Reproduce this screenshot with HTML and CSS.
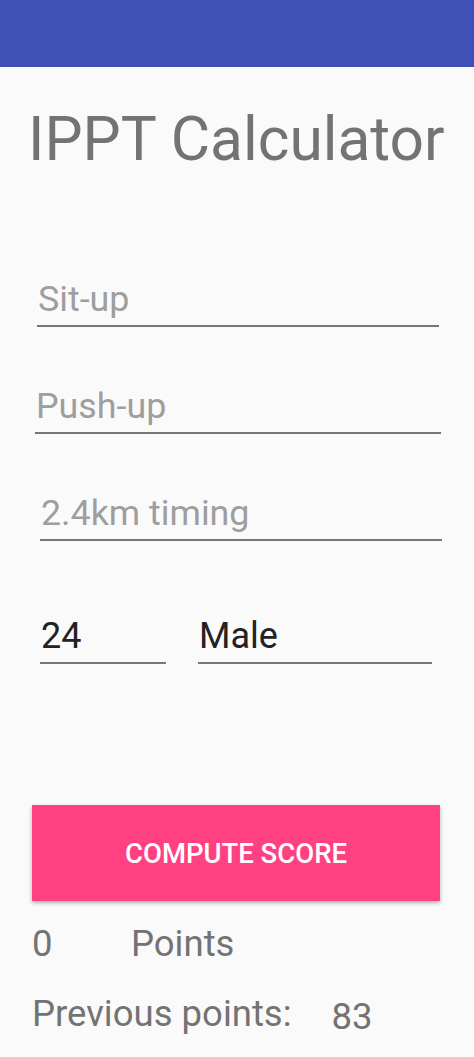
FILE: index.html
```html
<!DOCTYPE html>
<html>
<head>
<meta charset="utf-8">
<link rel="stylesheet" href="styles.css">
</head>
<body>
<div class="statusbar"></div>
<main class="content">
  <h1 class="title">IPPT Calculator</h1>
  <div class="field f-situp"><span class="hint">Sit-up</span></div>
  <div class="field f-pushup"><span class="hint">Push-up</span></div>
  <div class="field f-run"><span class="hint">2.4km timing</span></div>
  <div class="row">
    <div class="field f-age"><span class="value">24</span></div>
    <div class="field f-gender"><span class="value">Male</span></div>
  </div>
  <button class="compute">COMPUTE SCORE</button>
  <div class="result">
    <span class="num">0</span>
    <span class="label">Points</span>
  </div>
  <div class="prev">
    <span class="label">Previous points:</span>
    <span class="num">83</span>
  </div>
</main>
</body>
</html>
```
FILE: styles.css
```css
html, body {
  margin: 0;
  padding: 0;
  background: #fafafa;
  font-family: Roboto, "Noto Sans", sans-serif;
}
.statusbar {
  height: 67px;
  background: #3f51b5;
}
.content {
  display: flex;
  flex-direction: column;
}
.title {
  margin: 38px 0 0 28px;
  font-weight: 400;
  font-size: 60.5px;
  line-height: 70px;
  height: 70px;
  color: #737373;
}
.field {
  border-bottom: 2px solid #777;
  height: 48px;
  display: flex;
  align-items: flex-end;
  padding-bottom: 6px;
  box-sizing: border-box;
}
.hint {
  font-size: 35.8px;
  color: #9e9e9e;
  line-height: 40px;
}
.value {
  font-size: 36px;
  color: #222;
  line-height: 40px;
}
.f-situp { margin: 104px 35px 0 37px; }
.f-situp .hint { margin-left: 1px; }
.f-pushup { margin: 59px 33px 0 35px; }
.f-pushup .hint { margin-left: 1px; }
.f-run { margin: 59px 32px 0 40px; }
.f-run .hint { margin-left: 1px; }
.row {
  display: flex;
  margin-top: 75px;
  padding-left: 40px;
  gap: 32px;
}
.f-age { width: 126px; }
.f-age .value { margin-left: 1px; }
.f-gender { width: 234px; }
.f-gender .value { margin-left: 1px; }
.compute {
  margin: 141px 34px 0 32px;
  height: 96px;
  border: none;
  background: #ff4081;
  color: #fff;
  font-family: Roboto, sans-serif;
  font-weight: 500;
  font-size: 27.5px;
  box-shadow: 0 2px 4px rgba(0,0,0,0.3);
  padding: 0;
}
.result, .prev {
  display: flex;
  align-items: baseline;
  color: #737373;
  font-size: 36.5px;
  line-height: 40px;
  margin-left: 32px;
}
.result { margin-top: 23px; }
.result .num { width: 99px; }
.prev { margin-top: 30px; }
.prev .num { margin-left: 40px; position: relative; top: 3px; }
```
